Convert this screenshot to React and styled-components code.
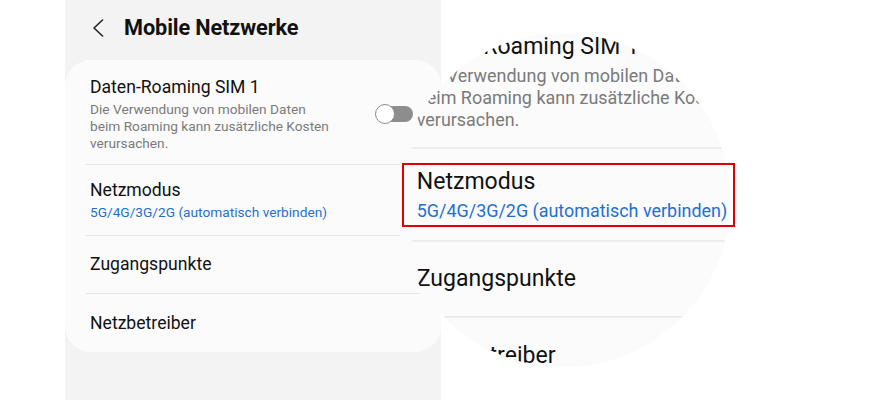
import React from "react";
import styled, { createGlobalStyle } from "styled-components";

const GlobalStyle = createGlobalStyle`
  html, body {
    margin: 0;
    padding: 0;
    background: #ffffff;
  }
  body {
    font-family: Roboto, "Noto Sans", "Liberation Sans", sans-serif;
    -webkit-font-smoothing: antialiased;
  }
`;

const Page = styled.div`
  position: relative;
  width: 879px;
  height: 400px;
  overflow: hidden;
  background: #ffffff;
  display: flex;
`;

const Phone = styled.div`
  margin-left: 65px;
  width: 376px;
  height: 400px;
  background: #f3f3f3;
  display: flex;
  flex-direction: column;
`;

const Header = styled.div`
  height: 60px;
  display: flex;
  align-items: center;
  gap: 20px;
  padding: 0 0 6px 27px;
  box-sizing: border-box;
`;

const BackIcon = styled.svg`
  width: 12px;
  height: 18px;
  margin-top: 2px;
`;

const HeaderTitle = styled.h1`
  margin: 0;
  font-size: 21.7px;
  font-weight: 700;
  color: #111111;
  letter-spacing: -0.1px;
`;

const Card = styled.div`
  width: 376px;
  background: #fbfbfb;
  border-radius: 26px;
  display: flex;
  flex-direction: column;
`;

const Row = styled.div`
  display: flex;
  align-items: center;
  padding: ${(p) => p.pad || "0 25px"};
  min-height: ${(p) => p.h || 57}px;
  box-sizing: border-box;
`;

const RowText = styled.div`
  flex: 1;
  display: flex;
  flex-direction: column;
`;

const Title = styled.div`
  font-size: 17.6px;
  line-height: 21px;
  color: #111111;
`;

const Sub = styled.div`
  margin-top: 3px;
  font-size: 13.7px;
  line-height: 17px;
  color: ${(p) => (p.blue ? "#1f6fd3" : "#7a7a7a")};
`;

const Divider = styled.div`
  height: 1px;
  margin: 0 21px;
  background: #e6e6e6;
`;

const Toggle = styled.div`
  position: relative;
  width: 38px;
  height: 20px;
  margin-left: auto;
  margin-top: -1px;
  flex-shrink: 0;
`;

const Track = styled.div`
  position: absolute;
  left: 8px;
  right: 0;
  top: 2px;
  bottom: 2px;
  border-radius: 10px;
  background: #8d8d8d;
`;

const Knob = styled.div`
  position: absolute;
  left: 0;
  top: 0;
  width: 20px;
  height: 20px;
  box-sizing: border-box;
  border-radius: 50%;
  background: #ffffff;
  border: 1.5px solid #8d8d8d;
`;

const Magnifier = styled.div`
  position: absolute;
  left: 396px;
  top: 33px;
  width: 334px;
  height: 334px;
  border-radius: 50%;
  overflow: hidden;
  background: #fbfbfb;
`;

const Zoomed = styled.div`
  position: absolute;
  left: -11.75px;
  top: -22.3px;
  transform: scale(1.31);
  transform-origin: 0 0;
`;

const Highlight = styled.div`
  position: absolute;
  left: 402px;
  top: 163px;
  width: 333px;
  height: 64px;
  box-sizing: border-box;
  border: 2px solid #e10000;
`;

function SettingsCard() {
  return (
    <Card>
      <Row pad="17px 28px 12px 25px" h={104}>
        <RowText>
          <Title>Daten-Roaming SIM 1</Title>
          <Sub>
            Die Verwendung von mobilen Daten
            <br />
            beim Roaming kann zusätzliche Kosten
            <br />
            verursachen.
          </Sub>
        </RowText>
        <Toggle>
          <Track />
          <Knob />
        </Toggle>
      </Row>
      <Divider />
      <Row pad="15px 25px 14px" h={70}>
        <RowText>
          <Title>Netzmodus</Title>
          <Sub blue>5G/4G/3G/2G (automatisch verbinden)</Sub>
        </RowText>
      </Row>
      <Divider />
      <Row h={57}>
        <Title>Zugangspunkte</Title>
      </Row>
      <Divider />
      <Row h={58}>
        <Title>Netzbetreiber</Title>
      </Row>
    </Card>
  );
}

export default function App() {
  return (
    <>
      <GlobalStyle />
      <Page>
        <Phone>
          <Header>
            <BackIcon viewBox="0 0 12 18">
              <polyline
                points="10.5,1 2,9 10.5,17"
                fill="none"
                stroke="#222"
                strokeWidth="1.6"
                strokeLinecap="round"
                strokeLinejoin="round"
              />
            </BackIcon>
            <HeaderTitle>Mobile Netzwerke</HeaderTitle>
          </Header>
          <SettingsCard />
        </Phone>
        <Magnifier>
          <Zoomed>
            <SettingsCard />
          </Zoomed>
        </Magnifier>
        <Highlight />
      </Page>
    </>
  );
}
